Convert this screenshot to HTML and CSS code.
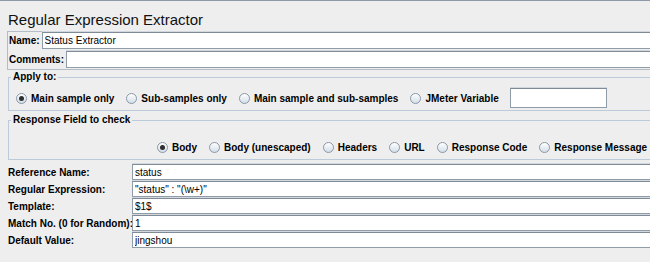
FILE: index.html
```html
<!DOCTYPE html>
<html lang="en">
<head>
    <meta charset="UTF-8">
    <title>Regular Expression Extractor</title>
    <link rel="stylesheet" href="styles.css">
</head>
<body>
    <div class="page">
        <div class="title">Regular Expression Extractor</div>

        <div class="name-box">
            <div class="row">
                <label for="name">Name:</label>
                <input class="field" type="text" id="name" value="Status Extractor">
            </div>
            <div class="row">
                <label for="comments">Comments:</label>
                <input class="field" type="text" id="comments" value="">
            </div>
        </div>

        <fieldset class="group apply">
            <legend>Apply to:</legend>
            <div class="options">
                <span class="opt"><span class="radio on"></span>Main sample only</span>
                <span class="opt"><span class="radio"></span>Sub-samples only</span>
                <span class="opt"><span class="radio"></span>Main sample and sub-samples</span>
                <span class="opt last"><span class="radio"></span>JMeter Variable</span>
                <input class="field var" type="text" value="">
            </div>
        </fieldset>

        <fieldset class="group resp">
            <legend>Response Field to check</legend>
            <div class="options">
                <span class="opt"><span class="radio on"></span>Body</span>
                <span class="opt"><span class="radio"></span>Body (unescaped)</span>
                <span class="opt"><span class="radio"></span>Headers</span>
                <span class="opt"><span class="radio"></span>URL</span>
                <span class="opt"><span class="radio"></span>Response Code</span>
                <span class="opt"><span class="radio"></span>Response Message</span>
            </div>
        </fieldset>

        <div class="params">
            <label for="refname">Reference Name:</label>
            <input class="field" type="text" id="refname" value="status">

            <label for="regex">Regular Expression:</label>
            <input class="field" type="text" id="regex" value="&quot;status&quot; : &quot;(\w+)&quot;">

            <label for="template">Template:</label>
            <input class="field" type="text" id="template" value="$1$">

            <label for="matchno">Match No. (0 for Random):</label>
            <input class="field" type="text" id="matchno" value="1">

            <label for="default">Default Value:</label>
            <input class="field" type="text" id="default" value="jingshou">
        </div>
    </div>
</body>
</html>
```

FILE: styles.css
```css
body {
    margin: 0;
    background: #eeeeee;
    font-family: "Liberation Sans", Arial, sans-serif;
    font-size: 10px;
    color: #000;
    overflow: hidden;
}

.page {
    width: 700px;
    border-top: 1px solid #8c99a6;
}

.title {
    margin: 10px 0 0 8px;
    height: 17px;
    line-height: 17px;
    font-size: 15px;
    color: #111;
}

label {
    font-weight: bold;
    white-space: nowrap;
}

.field {
    box-sizing: border-box;
    height: 17px;
    margin: 0;
    padding: 0 2px;
    border: 1px solid #909ca8;
    border-top-color: #7f8b97;
    border-radius: 0;
    background: #fff;
    box-shadow: 0 -1px 0 #d2d8de;
    font-family: "Liberation Sans", Arial, sans-serif;
    font-size: 10px;
    color: #000;
    outline: none;
}

/* name + comments */
.name-box {
    margin: 3px 0 0 7px;
    border: 1px solid #b4bdc6;
    padding: 0 0 1px 1px;
    display: flex;
    flex-direction: column;
    gap: 2px;
}

.row {
    display: flex;
    align-items: center;
    gap: 2px;
}

.row .field {
    flex: 1;
}

/* titled groups */
.group {
    margin: 1px 0 0 8px;
    padding: 5px 0 2px 7px;
    border: 1px solid #bccbd9;
    min-width: 0;
}

.group legend {
    font-weight: bold;
    padding: 0 2px;
    margin-left: -5px;
    line-height: 12px;
}

.options {
    display: flex;
    align-items: center;
    height: 20px;
}

.opt {
    display: flex;
    align-items: center;
    font-weight: bold;
    margin-right: 12px;
    white-space: nowrap;
}

.opt.last {
    margin-right: 11px;
}

.radio {
    position: relative;
    flex: none;
    box-sizing: border-box;
    width: 11px;
    height: 11px;
    margin-right: 4px;
    border: 1px solid #8a98a6;
    border-radius: 50%;
    background: linear-gradient(#ffffff, #d3dee9);
}

.radio.on::after {
    content: "";
    position: absolute;
    left: 2px;
    top: 2px;
    width: 5px;
    height: 5px;
    border-radius: 50%;
    background: #2e2e2e;
}

.field.var {
    width: 97px;
    height: 20px;
}

.resp {
    margin-top: 3px;
    padding-top: 14px;
    padding-bottom: 5px;
}

.resp .options {
    height: 14px;
    padding-left: 141px;
}

/* extractor parameters */
.params {
    margin-top: 4px;
    padding-left: 8px;
    display: grid;
    grid-template-columns: 124px 1fr;
    row-gap: 1px;
    align-items: center;
}

.params .field {
    height: 16px;
}
```
